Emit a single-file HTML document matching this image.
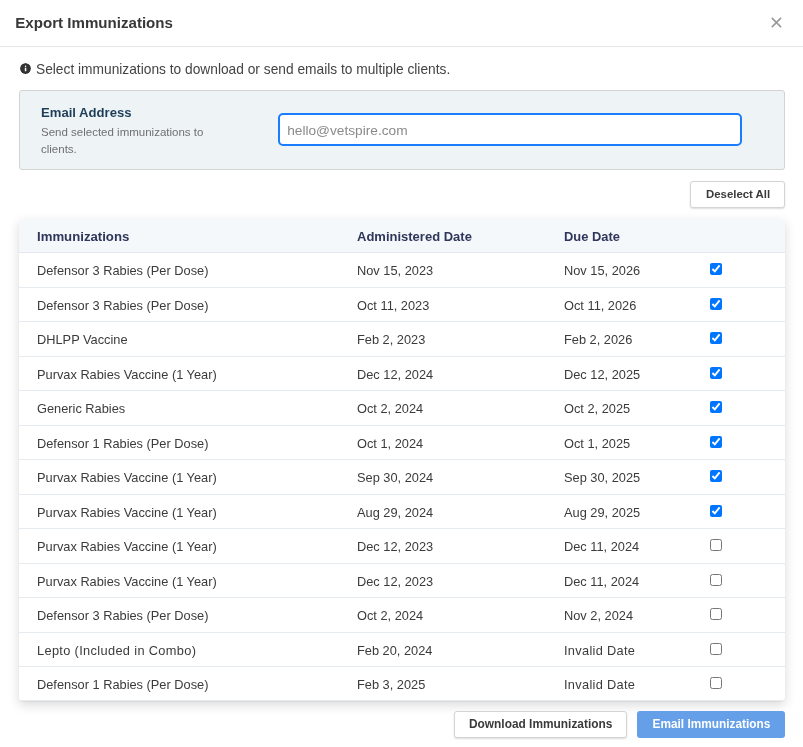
<!DOCTYPE html>
<html><head><meta charset="utf-8">
<style>
*{box-sizing:border-box;margin:0;padding:0}
html,body{width:803px;height:747px;overflow:hidden;background:#fff}
body{font-family:"Liberation Sans",sans-serif;color:#444;position:relative}
.abs{position:absolute}
#wrap{position:absolute;left:0;top:0;width:803px;height:747px;will-change:transform}
#title{left:15.3px;top:13.5px;font-size:15.1px;font-weight:700;color:#383838;white-space:nowrap;letter-spacing:0}
#close{left:769px;top:15px;width:14px;height:14px}
#hline{left:0;top:46px;width:803px;height:1px;background:#e6e6e6}
#info{left:20px;top:63px;width:11px;height:11px;border-radius:50%;background:#333}
#infotxt{left:36px;top:62px;font-size:13.75px;color:#444;white-space:nowrap}
#panel{left:19px;top:90px;width:766px;height:80px;background:#eef3f6;border:1px solid #d3d3d3;border-radius:3px}
#ea{left:41px;top:105px;font-size:13.1px;font-weight:700;color:#1e3d58;white-space:nowrap}
#sub{left:41px;top:124px;font-size:11.5px;line-height:16.5px;color:#707070;white-space:nowrap}
#input{left:278px;top:113px;width:464px;height:33px;background:#fff;border:2px solid #1a7cff;border-radius:5px}
#ph{left:287.2px;top:122.5px;font-size:13.7px;color:#8a8a8a;white-space:nowrap}
.btn{position:absolute;background:#fff;border:1px solid #d4d4d4;border-radius:3px;box-shadow:0 1px 2px rgba(0,0,0,.14);font-weight:700;color:#3a3a3a;white-space:nowrap}
#desel{left:690px;top:181px;width:95px;height:27px;font-size:11.4px}
#desel span{position:absolute;left:15px;top:5.8px}
#table{left:19px;top:219px;width:766px;height:482px;background:#fff;border-radius:4px;box-shadow:0 4px 12px rgba(0,0,0,.15),0 1px 2px rgba(0,0,0,.06);overflow:hidden}
#thead{position:absolute;left:0;top:0;width:766px;height:34px;background:#f5f8fb;border-bottom:1px solid #e3e8ee}
.th{position:absolute;top:10px;font-size:13.2px;font-weight:700;color:#30365a;white-space:nowrap}
.row{position:absolute;left:0;width:766px;height:34.5px;border-bottom:1px solid #e6ebf0}
.row span{position:absolute;top:10px;font-size:12.8px;color:#3b3b3b;white-space:nowrap}
.c1{left:18px}.c2{left:338px}.c3{left:545px}
.row input{position:absolute;left:691px;margin:0;width:12px;height:12px}
#dl{left:454px;top:711px;width:173px;height:27px;font-size:11.9px}
#dl span{position:absolute;left:14px;top:4.5px}
#em{position:absolute;left:637px;top:711px;width:148px;height:27px;background:#649fe8;border-radius:3px;font-size:11.85px;font-weight:700;color:#fff;white-space:nowrap}
#em span{position:absolute;left:15.5px;top:6px}
</style></head><body><div id="wrap">
<div id="title" class="abs">Export Immunizations</div>
<svg id="close" class="abs" viewBox="0 0 14 14"><path d="M2.8 2.9L12 12.1M12 2.9L2.8 12.1" stroke="#999" stroke-width="1.6" fill="none"/></svg>
<div id="hline" class="abs"></div>
<svg id="info" class="abs" viewBox="0 0 11 11" style="background:none"><circle cx="5.5" cy="5.5" r="5.5" fill="#333"/><rect x="4.8" y="4.7" width="1.5" height="3.5" fill="#fff"/><circle cx="5.55" cy="3.3" r="0.75" fill="#fff"/></svg>
<div id="infotxt" class="abs">Select immunizations to download or send emails to multiple clients.</div>
<div id="panel" class="abs"></div>
<div id="ea" class="abs">Email Address</div>
<div id="sub" class="abs">Send selected immunizations to<br>clients.</div>
<div id="input" class="abs"></div>
<div id="ph" class="abs">hello@vetspire.com</div>
<div id="desel" class="btn"><span>Deselect All</span></div>
<div id="table" class="abs">
<div id="thead"><div class="th c1">Immunizations</div><div class="th c2" style="font-size:13px">Administered Date</div><div class="th c3" style="font-size:12.9px">Due Date</div></div>
<div class="row" style="top:34px"><span class="c1">Defensor 3 Rabies (Per Dose)</span><span class="c2">Nov 15, 2023</span><span class="c3">Nov 15, 2026</span><input type="checkbox" checked style="top:10px"></div>
<div class="row" style="top:68.5px"><span class="c1">Defensor 3 Rabies (Per Dose)</span><span class="c2">Oct 11, 2023</span><span class="c3">Oct 11, 2026</span><input type="checkbox" checked style="top:10.5px"></div>
<div class="row" style="top:103px"><span class="c1">DHLPP Vaccine</span><span class="c2">Feb 2, 2023</span><span class="c3">Feb 2, 2026</span><input type="checkbox" checked style="top:10px"></div>
<div class="row" style="top:137.5px"><span class="c1">Purvax Rabies Vaccine (1 Year)</span><span class="c2">Dec 12, 2024</span><span class="c3">Dec 12, 2025</span><input type="checkbox" checked style="top:10.5px"></div>
<div class="row" style="top:172px"><span class="c1">Generic Rabies</span><span class="c2">Oct 2, 2024</span><span class="c3">Oct 2, 2025</span><input type="checkbox" checked style="top:10px"></div>
<div class="row" style="top:206.5px"><span class="c1">Defensor 1 Rabies (Per Dose)</span><span class="c2">Oct 1, 2024</span><span class="c3">Oct 1, 2025</span><input type="checkbox" checked style="top:10.5px"></div>
<div class="row" style="top:241px"><span class="c1">Purvax Rabies Vaccine (1 Year)</span><span class="c2">Sep 30, 2024</span><span class="c3">Sep 30, 2025</span><input type="checkbox" checked style="top:10px"></div>
<div class="row" style="top:275.5px"><span class="c1">Purvax Rabies Vaccine (1 Year)</span><span class="c2">Aug 29, 2024</span><span class="c3">Aug 29, 2025</span><input type="checkbox" checked style="top:10.5px"></div>
<div class="row" style="top:310px"><span class="c1">Purvax Rabies Vaccine (1 Year)</span><span class="c2">Dec 12, 2023</span><span class="c3">Dec 11, 2024</span><input type="checkbox" style="top:10px"></div>
<div class="row" style="top:344.5px"><span class="c1">Purvax Rabies Vaccine (1 Year)</span><span class="c2">Dec 12, 2023</span><span class="c3">Dec 11, 2024</span><input type="checkbox" style="top:10.5px"></div>
<div class="row" style="top:379px"><span class="c1">Defensor 3 Rabies (Per Dose)</span><span class="c2">Oct 2, 2024</span><span class="c3">Nov 2, 2024</span><input type="checkbox" style="top:10px"></div>
<div class="row" style="top:413.5px"><span class="c1" style="letter-spacing:0.34px">Lepto (Included in Combo)</span><span class="c2">Feb 20, 2024</span><span class="c3" style="letter-spacing:0.3px">Invalid Date</span><input type="checkbox" style="top:10.5px"></div>
<div class="row" style="top:448px;height:34px"><span class="c1">Defensor 1 Rabies (Per Dose)</span><span class="c2">Feb 3, 2025</span><span class="c3" style="letter-spacing:0.3px">Invalid Date</span><input type="checkbox" style="top:10px"></div>
</div>
<div id="dl" class="btn"><span>Download Immunizations</span></div>
<div id="em"><span>Email Immunizations</span></div>
</div></body></html>
